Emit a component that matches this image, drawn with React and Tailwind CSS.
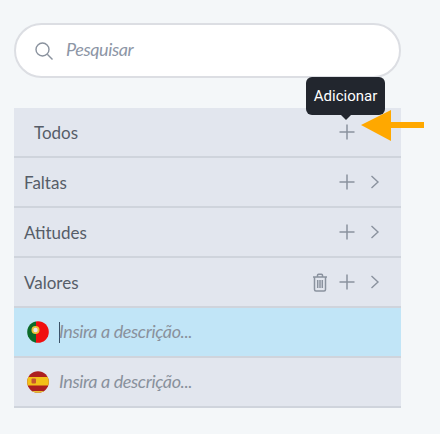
import React from "react";

const Plus = () => (
  <svg width="16" height="16" viewBox="0 0 16 16" fill="none" stroke="#8a929e" strokeWidth="1.5" className="shrink-0">
    <path d="M8 .5v15M.5 8h15" />
  </svg>
);
const Chevron = () => (
  <svg width="10" height="14" viewBox="0 0 10 14" fill="none" stroke="#8a929e" strokeWidth="1.4" className="shrink-0">
    <path d="M1.500 1 8 7l-6.500 6" />
  </svg>
);
const Trash = () => (
  <svg width="16" height="19" viewBox="0 0 16 19" fill="none" stroke="#8a929e" strokeWidth="1.5" className="shrink-0">
    <path d="M1 4h14M5.500 4V2.200q0-1 1-1h3q1 0 1 1V4M2.500 4v12.500q0 1.500 1.500 1.500h8q1.500 0 1.500-1.500V4M5.700 7v8M8 7v8M10.300 7v8" />
  </svg>
);

const Row = ({ label, pad = "pl-2.5", trash, chevron = true, children }) => (
  <div className={`relative flex h-[50px] items-center border-b-2 border-[#cfd4dc] ${pad} pr-[21px] text-[#565d68]`}>
    <span className="pt-0.5 text-[17px]">{label}</span>
    <div className="ml-auto flex items-center">
      {trash && <span className="mr-[11px] flex"><Trash /></span>}
      <Plus />
      {chevron ? <span className="ml-[15px] flex"><Chevron /></span> : <span className="w-[25px]" />}
    </div>
    {children}
  </div>
);

const Portugal = () => (
  <svg width="22" height="22" viewBox="0 0 22 22" className="shrink-0">
    <defs><clipPath id="pt"><circle cx="11" cy="11" r="10.800" /></clipPath></defs>
    <g clipPath="url(#pt)">
      <rect width="9" height="22" fill="#0b6b2a" />
      <rect x="9" width="13" height="22" fill="#f00f0f" />
      <circle cx="8.500" cy="9" r="4" fill="#e8c23a" />
      <circle cx="8.500" cy="9" r="2.200" fill="#e8e6f0" />
    </g>
  </svg>
);
const Spain = () => (
  <svg width="22" height="22" viewBox="0 0 22 22" className="shrink-0">
    <defs><clipPath id="es"><circle cx="11" cy="11" r="10.800" /></clipPath></defs>
    <g clipPath="url(#es)">
      <rect width="22" height="22" fill="#ad1f1f" />
      <rect y="6" width="22" height="8.500" fill="#f2c018" />
      <rect y="20" width="22" height="2" fill="#e8c23a" />
      <rect x="4.500" y="7.500" width="4.500" height="5" rx="1" fill="#c8552e" />
    </g>
  </svg>
);

const LangRow = ({ flag, active }) => (
  <div className={`flex h-[50px] items-center border-b-2 border-[#cfd4dc] pl-[13px] ${active ? "bg-[#c1e5f7]" : ""}`}>
    {flag}
    <span className={`ml-[10px] flex h-[21px] items-center border-l text-[18px] italic tracking-[-0.38px] text-[#89919c] ${active ? "border-[#3b5166]" : "border-transparent"}`}>
      <span className="-translate-x-px -translate-y-px">Insira a descrição...</span>
    </span>
  </div>
);

export default function App() {
  return (
    <div className="relative h-[434px] w-[440px] overflow-hidden bg-[#f4f7f9] pt-[23px] [font-family:'Lato','Liberation_Sans',sans-serif]">
      <div className="mx-[14px] flex h-[55px] w-[387px] items-center rounded-[28px] border-2 border-[#dcdee3] bg-white pl-[18px]">
        <svg width="20" height="20" viewBox="0 0 20 20" fill="none" stroke="#8a929e" strokeWidth="1.4" className="shrink-0">
          <circle cx="8.500" cy="8.500" r="6.500" />
          <path d="m13.300 13.300 5.200 5.200" />
        </svg>
        <span className="ml-[12px] -translate-y-px text-[18px] italic tracking-[-0.4px] text-[#8d96a6]">Pesquisar</span>
      </div>
      <div className="ml-[14px] mt-[30px] w-[387px] bg-[#e2e6ee]">
        <Row label="Todos" pad="pl-5" chevron={false}>
          <div className="absolute left-[292px] top-[-31px] flex h-[38px] w-[79px] items-center justify-center rounded-md bg-[#22262e] text-[15px] text-white [font-family:'Roboto',sans-serif]">
            Adicionar
            <span className="absolute bottom-[-5px] left-[34px] h-0 w-0 border-x-[6px] border-t-[6px] border-x-transparent border-t-[#22262e]" />
          </div>
        </Row>
        <Row label="Faltas" />
        <Row label="Atitudes" />
        <Row label="Valores" trash />
        <LangRow flag={<Portugal />} active />
        <LangRow flag={<Spain />} />
      </div>
      <svg width="66" height="32" viewBox="0 0 66 32" className="absolute left-[360px] top-[110px]">
        <path d="M1 15 31 0v12h33v6H31v13z" fill="#ffa800" />
      </svg>
    </div>
  );
}
